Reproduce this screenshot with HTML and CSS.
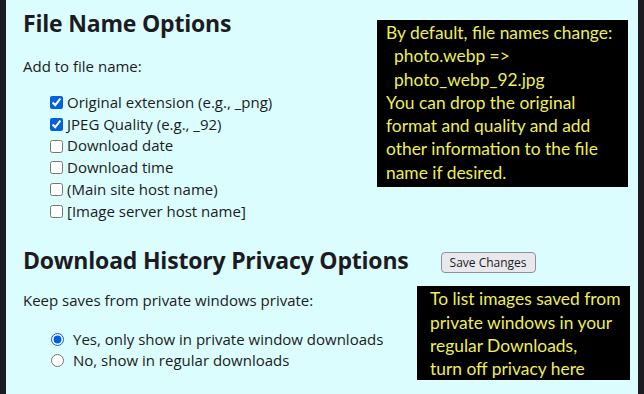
FILE: index.html
```html
<!DOCTYPE html>
<html>
<head>
    <title>Image Saver Options</title>
    <link rel="stylesheet" href="styles.css">
</head>
<body>

    <div class="page">
        <div class="section">
            <div class="note note-names">
                <div>By default, file names change:</div>
                <div class="indent">photo.webp =&gt;</div>
                <div class="indent">photo_webp_92.jpg</div>
                <div>You can drop the original</div>
                <div>format and quality and add</div>
                <div>other information to the file</div>
                <div>name if desired.</div>
            </div>
            <h1>File Name Options</h1>
            <p class="intro">Add to file name:</p>
            <div class="checklist">
                <label class="check-row"><input type="checkbox" checked> Original extension (e.g., _png)</label>
                <label class="check-row"><input type="checkbox" checked> JPEG Quality (e.g., _92)</label>
                <label class="check-row"><input type="checkbox"> Download date</label>
                <label class="check-row"><input type="checkbox"> Download time</label>
                <label class="check-row"><input type="checkbox"> (Main site host name)</label>
                <label class="check-row"><input type="checkbox"> [Image server host name]</label>
            </div>
        </div>

        <div class="section">
            <div class="heading-row">
                <h1>Download History Privacy Options</h1>
                <button type="button" class="save-button">Save Changes</button>
            </div>
            <div class="note note-private">
                <div>To list images saved from</div>
                <div>private windows in your</div>
                <div>regular Downloads,</div>
                <div>turn off privacy here</div>
            </div>
            <p class="intro intro-private">Keep saves from private windows private:</p>
            <div class="radiolist">
                <label class="radio-row"><input type="radio" name="privacy" checked> Yes, only show in private window downloads</label>
                <label class="radio-row"><input type="radio" name="privacy"> No, show in regular downloads</label>
            </div>
        </div>
    </div>

</body>
</html>
```

FILE: styles.css
```css
body {
    margin: 0;
    background: #1c1b22;
    font-family: "Open Sans", sans-serif;
    color: #1c1b22;
}

.page {
    margin: 0 6px;
    min-height: 394px;
    box-sizing: border-box;
    padding: 1px 10px 0 17px;
    background: #dbfdfd;
}

h1 {
    font-size: 23px;
    line-height: 28px;
    font-weight: 700;
    letter-spacing: -0.2px;
    margin: 8px 0 0 0;
}

.intro {
    font-size: 15px;
    line-height: 20px;
    margin: 19px 0 0 0;
}

.checklist {
    margin-top: 16px;
    padding-left: 27px;
}

.check-row,
.radio-row {
    display: flex;
    align-items: center;
    font-size: 15px;
    line-height: 21.7px;
}

.check-row input {
    width: 13px;
    height: 13px;
    margin: 0 4px 0 0;
    accent-color: #0060df;
}

/* second block */
.heading-row {
    display: flex;
    align-items: center;
    gap: 32px;
    margin-top: 24px;
}

.heading-row h1 {
    margin: 0;
}

.save-button {
    font-family: "Open Sans", sans-serif;
    font-size: 12px;
    line-height: 17px;
    padding: 1px 8px;
    color: #1c1b22;
    background: #e9e9ed;
    border: 1px solid #8f8f9d;
    border-radius: 4px;
    margin-top: 4px;
}

.intro-private {
    margin-top: 16px;
}

.radiolist {
    margin-top: 19px;
    padding-left: 28px;
}

.radio-row {
    line-height: 21px;
}

.radio-row input {
    width: 13px;
    height: 13px;
    margin: 0 9px 0 0;
    accent-color: #0060df;
}

/* black call-out boxes */
.note {
    float: right;
    background: #000;
    color: #eeee58;
    font-family: Lato, "Open Sans", sans-serif;
    font-size: 17.4px;
    line-height: 23.3px;
}

.note-names {
    width: 251px;
    height: 167px;
    box-sizing: border-box;
    margin-top: 11px;
    padding: 1px 6px 0 9px;
}

.note-names .indent {
    padding-left: 8px;
}

.note-private {
    width: 213px;
    height: 94px;
    box-sizing: border-box;
    margin: 12px -2px 0 0;
    padding: 1px 4px 0 13px;
}
```
